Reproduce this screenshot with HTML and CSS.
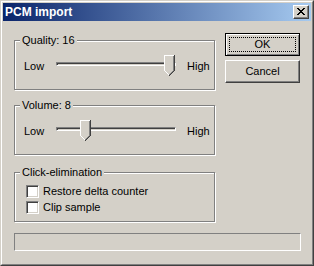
FILE: index.html
```html
<!DOCTYPE html>
<html lang="en">
<head>
    <meta charset="UTF-8">
    <title>PCM import</title>
    <link rel="stylesheet" href="styles.css">
</head>
<body>
    <div class="window">
        <div class="frame">
            <div class="titlebar">
                <span class="title">PCM import</span>
                <span class="close">
                    <svg width="8" height="7" viewBox="0 0 8 7" shape-rendering="crispEdges"><path fill="#000" d="M0 0h2v1h-2z M6 0h2v1h-2z M1 1h2v1h-2z M5 1h2v1h-2z M2 2h4v1h-4z M3 3h2v1h-2z M2 4h4v1h-4z M1 5h2v1h-2z M5 5h2v1h-2z M0 6h2v1h-2z M6 6h2v1h-2z"/></svg>
                </span>
            </div>
            <div class="content">
                <div class="main">
                    <div class="groups">
                        <div class="group quality">
                            <span class="legend">Quality: 16</span>
                            <div class="slider">
                                <span class="low">Low</span>
                                <div class="track">
                                    <div class="channel"></div>
                                    <svg class="thumb" style="left: 108px" width="11" height="21" viewBox="0 0 11 21" shape-rendering="crispEdges">
                                        <polygon fill="#d4d0c8" points="0,0 11,0 11,16 5.5,21 0,16"/>
                                        <path fill="#fff" d="M0 0h10v1H1v15H0z M1 16h1v1h-1z M2 17h1v1h-1z M3 18h1v1h-1z M4 19h1v1h-1z"/>
                                        <path fill="#808080" d="M9 1h1v15h-1z M8 16h1v1h-1z M7 17h1v1h-1z M6 18h1v1h-1z M5 19h1v1h-1z"/>
                                        <path fill="#404040" d="M10 0h1v16h-1z M9 16h1v1h-1z M8 17h1v1h-1z M7 18h1v1h-1z M6 19h1v1h-1z M5 20h1v1h-1z"/>
                                    </svg>
                                </div>
                                <span class="high">High</span>
                            </div>
                        </div>
                        <div class="group volume">
                            <span class="legend">Volume: 8</span>
                            <div class="slider">
                                <span class="low">Low</span>
                                <div class="track">
                                    <div class="channel"></div>
                                    <svg class="thumb" style="left: 24px" width="11" height="21" viewBox="0 0 11 21" shape-rendering="crispEdges">
                                        <polygon fill="#d4d0c8" points="0,0 11,0 11,16 5.5,21 0,16"/>
                                        <path fill="#fff" d="M0 0h10v1H1v15H0z M1 16h1v1h-1z M2 17h1v1h-1z M3 18h1v1h-1z M4 19h1v1h-1z"/>
                                        <path fill="#808080" d="M9 1h1v15h-1z M8 16h1v1h-1z M7 17h1v1h-1z M6 18h1v1h-1z M5 19h1v1h-1z"/>
                                        <path fill="#404040" d="M10 0h1v16h-1z M9 16h1v1h-1z M8 17h1v1h-1z M7 18h1v1h-1z M6 19h1v1h-1z M5 20h1v1h-1z"/>
                                    </svg>
                                </div>
                                <span class="high">High</span>
                            </div>
                        </div>
                        <div class="group clicks">
                            <span class="legend">Click-elimination</span>
                            <div class="checks">
                                <label class="check"><span class="box"></span>Restore delta counter</label>
                                <label class="check"><span class="box"></span>Clip sample</label>
                            </div>
                        </div>
                    </div>
                    <div class="buttons">
                        <button class="btn default"><span class="focus">OK</span></button>
                        <button class="btn">Cancel</button>
                    </div>
                </div>
                <div class="status"></div>
            </div>
        </div>
    </div>
</body>
</html>
```

FILE: styles.css
```css
body {
    margin: 0;
    background: #d4d0c8;
}
.window {
    width: 314px;
    height: 266px;
    box-sizing: border-box;
    border: 1px solid;
    border-color: #d4d0c8 #404040 #404040 #d4d0c8;
    background: #d4d0c8;
    font-family: "Liberation Sans", Arial, sans-serif;
    font-size: 11px;
    line-height: 13px;
    color: #000;
}
.frame {
    height: 100%;
    box-sizing: border-box;
    border: 1px solid;
    border-color: #fff #808080 #808080 #fff;
    padding: 1px;
}
.titlebar {
    height: 18px;
    display: flex;
    align-items: center;
    justify-content: space-between;
    padding: 0 2px;
    background: linear-gradient(to right, #0a246a, #a6caf0);
    color: #fff;
    font-size: 12px;
    font-weight: bold;
}
.close {
    width: 16px;
    height: 14px;
    box-sizing: border-box;
    background: #d4d0c8;
    border: 1px solid;
    border-color: #fff #404040 #404040 #fff;
    box-shadow: inset -1px -1px #808080;
    display: flex;
    align-items: center;
    justify-content: center;
}
.close svg {
    display: block;
    margin: 0 1px 1px 0;
}
.content {
    padding: 12px 10px 0 11px;
}
.main {
    display: flex;
    gap: 10px;
}
.groups {
    width: 201px;
    margin-top: 7px;
}
.group {
    position: relative;
    height: 50px;
    box-sizing: border-box;
    border: 1px solid #808080;
    box-shadow: inset 1px 1px #fff, 1px 1px #fff;
}
.volume {
    margin-top: 15px;
}
.clicks {
    margin-top: 17px;
}
.legend {
    position: absolute;
    top: -7px;
    left: 5px;
    padding: 0 2px;
    background: #d4d0c8;
}
.slider {
    display: flex;
    align-items: flex-start;
    padding: 14px 0 0 9px;
}
.low {
    width: 32px;
    margin-top: 5px;
}
.high {
    margin: 5px 0 0 11px;
}
.track {
    position: relative;
    width: 120px;
    height: 21px;
}
.channel {
    margin-top: 7px;
    height: 4px;
    box-sizing: border-box;
    border: 1px solid;
    border-color: #808080 #fff #fff #808080;
    box-shadow: inset 1px 1px #404040;
}
.thumb {
    position: absolute;
    top: 0;
    display: block;
}
.checks {
    display: flex;
    flex-direction: column;
    gap: 3px;
    padding: 12px 0 0 11px;
}
.check {
    display: flex;
    align-items: center;
    gap: 4px;
}
.box {
    width: 13px;
    height: 13px;
    box-sizing: border-box;
    background: #fff;
    border: 1px solid;
    border-color: #808080 #fff #fff #808080;
    box-shadow: inset 1px 1px #404040, inset -1px -1px #d4d0c8;
}
.buttons {
    display: flex;
    flex-direction: column;
    gap: 4px;
}
.btn {
    width: 75px;
    height: 23px;
    box-sizing: border-box;
    padding: 0;
    background: #d4d0c8;
    border: 1px solid;
    border-color: #fff #404040 #404040 #fff;
    box-shadow: inset -1px -1px #808080;
    font: inherit;
    color: #000;
}
.btn.default {
    padding: 3px;
    border-color: #000;
    box-shadow: inset 1px 1px #fff, inset -1px -1px #808080;
}
.focus {
    display: flex;
    align-items: center;
    justify-content: center;
    height: 100%;
    box-sizing: border-box;
    border: 1px dotted #000;
}
.status {
    margin-top: 11px;
    height: 18px;
    box-sizing: border-box;
    border: 1px solid;
    border-color: #808080 #fff #fff #808080;
}
```
